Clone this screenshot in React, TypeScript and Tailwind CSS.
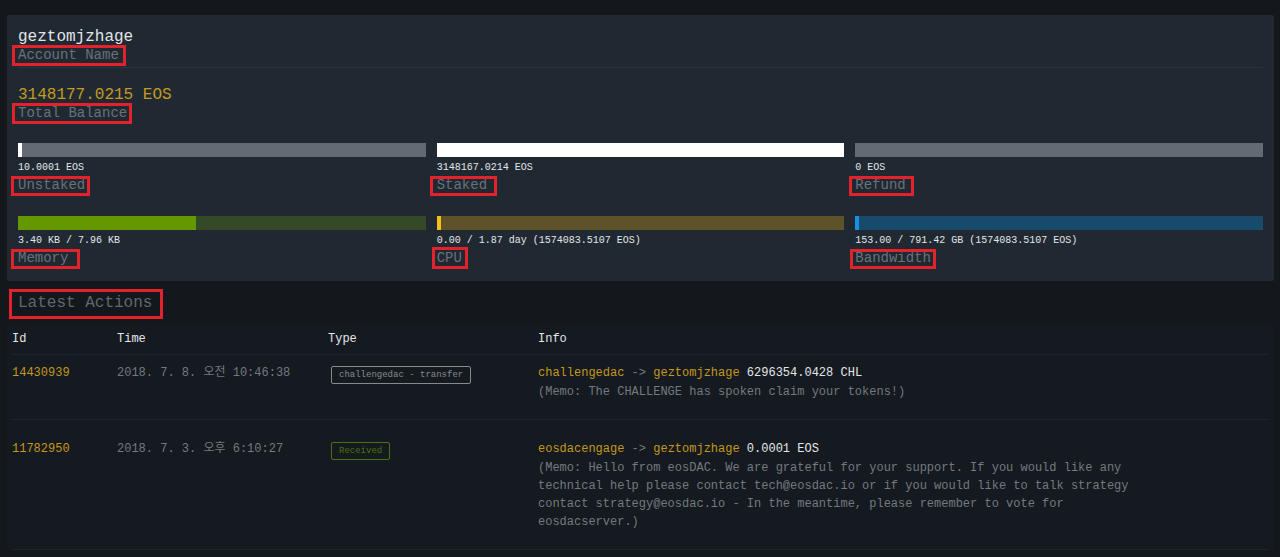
import clsx from "clsx";

interface Resource {
  label: string;
  value: string;
  percent: number;
  track: string;
  fill: string;
  mark: string;
}

const resources: Resource[] = [
  { label: "Unstaked", value: "10.0001 EOS", percent: 1, track: "bg-[#636a73]", fill: "bg-white", mark: "-left-[7px] -right-[5px] -top-px -bottom-[3px]" },
  { label: "Staked", value: "3148167.0214 EOS", percent: 100, track: "bg-[#636a73]", fill: "bg-white", mark: "-left-[7px] -right-2.5 -top-px -bottom-[3px]" },
  { label: "Refund", value: "0 EOS", percent: 0, track: "bg-[#636a73]", fill: "bg-white", mark: "-left-1.5 -right-2 -top-px -bottom-[3px]" },
  { label: "Memory", value: "3.40 KB / 7.96 KB", percent: 43.7, track: "bg-[#344925]", fill: "bg-[#639800]", mark: "-left-[7px] -right-3 -top-px -bottom-[3px]" },
  { label: "CPU", value: "0.00 / 1.87 day (1574083.5107 EOS)", percent: 1, track: "bg-[#5e5228]", fill: "bg-[#f5be1b]", mark: "-left-[5px] -right-1.5 -top-[3px] -bottom-[3px]" },
  { label: "Bandwidth", value: "153.00 / 791.42 GB (1574083.5107 EOS)", percent: 1, track: "bg-[#184a6b]", fill: "bg-[#1590e2]", mark: "-left-[5px] -right-[5px] -top-px -bottom-[3px]" },
];

const actions = [
  {
    id: "14430939",
    time: "2018. 7. 8. 오전 10:46:38",
    type: "challengedac - transfer",
    received: false,
    from: "challengedac",
    to: "geztomjzhage",
    amount: "6296354.0428 CHL",
    memo: "The CHALLENGE has spoken claim your tokens!",
  },
  {
    id: "11782950",
    time: "2018. 7. 3. 오후 6:10:27",
    type: "Received",
    received: true,
    from: "eosdacengage",
    to: "geztomjzhage",
    amount: "0.0001 EOS",
    memo: "Hello from eosDAC. We are grateful for your support. If you would like any technical help please contact tech@eosdac.io or if you would like to talk strategy contact strategy@eosdac.io - In the meantime, please remember to vote for eosdacserver.",
  },
];

function Mark({ className }: { className: string }) {
  return <span aria-hidden="true" className={clsx("absolute border-[3px] border-[#e3222b] pointer-events-none", className)} />;
}

function Label({ text, mark }: { text: string; mark: string }) {
  return (
    <div className="flex">
      <span className="relative text-sm leading-4 text-[#69727b]">
        {text}
        <Mark className={mark} />
      </span>
    </div>
  );
}

function ResourceBar({ item }: { item: Resource }) {
  return (
    <div>
      <div role="progressbar" aria-label={item.label} aria-valuenow={item.percent} className={clsx("h-3.5", item.track)}>
        {item.percent > 0 && <div className={clsx("h-full", item.fill)} style={{ width: `${item.percent}%` }} />}
      </div>
      <p className="mt-0.5 text-[10px] leading-[18px] text-[#e4e7ea]">{item.value}</p>
      <Label text={item.label} mark={item.mark} />
    </div>
  );
}

function App() {
  return (
    <div className="w-full min-h-screen bg-[#14171b] pt-[15px] pl-[7px] pr-1.5 font-['Courier_New','Liberation_Mono','Noto_Sans_CJK_KR',monospace]">
      <section className="rounded-xs bg-[#202932] px-[11px] pt-3 pb-[15px]">
        <div className="border-b border-[#2c353e] pb-1">
          <h1 className="text-base leading-5 text-[#e2e5e8]">geztomjzhage</h1>
          <Label text="Account Name" mark="-left-1.5 -right-[7px] -top-0.5 -bottom-[3px]" />
        </div>
        <div className="pt-[17px]">
          <p className="text-base leading-5 text-[#c49a1f]">3148177.0215 EOS</p>
          <Label text="Total Balance" mark="-left-1.5 -right-[5px] -top-0.5 -bottom-[3px]" />
        </div>
        <div className="mt-[22px] grid grid-cols-3 gap-x-[11px] gap-y-[23px]">
          {resources.map((item) => (
            <ResourceBar key={item.label} item={item} />
          ))}
        </div>
      </section>

      <h2 className="flex h-11 items-center pl-[11px] text-base leading-5 text-[#61676e]">
        <span className="relative">
          Latest Actions
          <Mark className="-left-[9px] -right-[11px] -top-1 -bottom-1.5" />
        </span>
      </h2>

      <section className="bg-[#151a20] px-[5px]">
        <table className="w-full table-fixed text-left text-xs">
          <colgroup>
            <col className="w-[105px]" />
            <col className="w-[211px]" />
            <col className="w-[210px]" />
            <col />
          </colgroup>
          <thead>
            <tr className="h-[29px] border-b border-[#1d2328] text-[#e4e6e8]">
              <th className="font-normal">Id</th>
              <th className="font-normal">Time</th>
              <th className="font-normal">Type</th>
              <th className="font-normal">Info</th>
            </tr>
          </thead>
          <tbody className="text-[#73797f]">
            {actions.map((action) => (
              <tr
                key={action.id}
                className="border-b border-[#1f262b] align-top [&>td]:pt-[19px] [&>td]:pb-[18px] first:[&>td]:pt-2"
              >
                <td className="leading-5">
                  <a href={`#${action.id}`} className="text-[#c3981d]">
                    {action.id}
                  </a>
                </td>
                <td className="leading-5">{action.time}</td>
                <td>
                  <span
                    className={clsx(
                      "mt-[3px] ml-[3px] inline-block rounded-xs border px-[7px] text-[9px] leading-4",
                      action.received ? "border-[#4b7209] text-[#4b7209]" : "border-[#858a8e] text-[#858a8e]",
                    )}
                  >
                    {action.type}
                  </span>
                </td>
                <td>
                  <p className="leading-5">
                    <a href={`#${action.from}`} className="text-[#c3981d]">
                      {action.from}
                    </a>
                    {" -> "}
                    <a href={`#${action.to}`} className="text-[#c3981d]">
                      {action.to}
                    </a>{" "}
                    <span className="text-[#e4e6e8]">{action.amount}</span>
                  </p>
                  <p className="max-w-[620px] leading-[18px]">{`(Memo: ${action.memo})`}</p>
                </td>
              </tr>
            ))}
          </tbody>
        </table>
      </section>
    </div>
  );
}

export default App;
